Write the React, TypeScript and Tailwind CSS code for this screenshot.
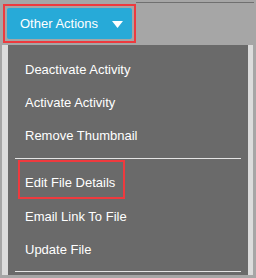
import React from "react";

const topItems = ["Deactivate Activity", "Activate Activity", "Remove Thumbnail"];

export default function App() {
  return (
    <div
      className="w-[256px] h-[278px] bg-[#a6a6a6] overflow-hidden flex flex-col"
      style={{ fontFamily: '"Liberation Sans", Arial, sans-serif' }}
    >
      {/* toolbar row */}
      <div className="flex h-[45px]">
        <div className="pl-[3px] pt-[4px]">
          <div className="w-[133px] h-[39px] border-2 border-[#ee3a3e] p-[2px]">
            <button className="w-full h-full bg-[#27aad8] rounded-[2px] flex items-center pl-[13px] text-white text-[13px]">
              <span>Other Actions</span>
              <svg width="11" height="7" viewBox="0 0 11 7" className="ml-[14px] mt-[1px]">
                <polygon points="0,0 11,0 5.5,7" fill="#ffffff" />
              </svg>
            </button>
          </div>
        </div>
        <div className="flex-1 mt-[2px] mr-[2px] h-px bg-[#707070]" />
      </div>

      {/* dropdown */}
      <div className="flex h-[230px]">
        <div className="ml-[2px] w-[6px] bg-[#dcdcdc]" />
        <div className="w-[240px] bg-[#6a6a6a] pt-[8px] text-white text-[13px]">
          {topItems.map((label) => (
            <div key={label} className="h-[33px] flex items-center pl-[17px]">
              {label}
            </div>
          ))}
          <div className="mt-[6px] mx-[7px] h-px bg-[#e4e4e4]" />
          <div className="mt-[1px] ml-[10px] w-[107px] h-[39px] border-2 border-[#ee3a3e] flex items-center pl-[5px] pt-[6px]">
            Edit File Details
          </div>
          <div className="mt-[1px] h-[33px] flex items-center pl-[17px]">Email Link To File</div>
          <div className="h-[33px] flex items-center pl-[17px]">Update File</div>
          <div className="mt-[5px] mx-[7px] h-px bg-[#e4e4e4]" />
        </div>
        <div className="w-[5px] bg-[#dcdcdc]" />
      </div>
    </div>
  );
}
